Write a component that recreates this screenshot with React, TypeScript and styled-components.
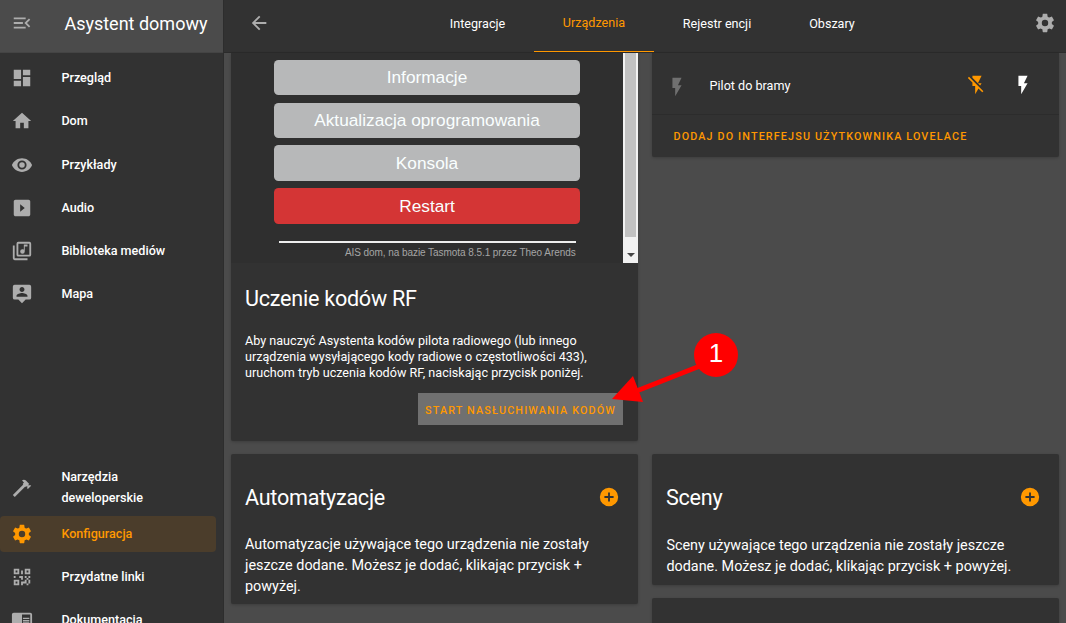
import React from "react";
import styled, { createGlobalStyle } from "styled-components";

const ACCENT = "#ff9800";
const PANEL = "#323232";
const BACKDROP = "#4b4b4b";

const icons = {
  menuOpen:
    "M21,15.61L19.59,17L14.58,12L19.59,7L21,8.39L17.44,12L21,15.61M3,6H16V8H3V6M3,13V11H13V13H3M3,18V16H16V18H3Z",
  dashboard: "M13,3V9H21V3M13,21H21V11H13M3,21H11V15H3M3,13H11V3H3V13Z",
  home: "M10,20V14H14V20H19V12H22L12,3L2,12H5V20H10Z",
  eye: "M12,9A3,3 0 0,0 9,12A3,3 0 0,0 12,15A3,3 0 0,0 15,12A3,3 0 0,0 12,9M12,17A5,5 0 0,1 7,12A5,5 0 0,1 12,7A5,5 0 0,1 17,12A5,5 0 0,1 12,17M12,4.5C7,4.5 2.73,7.61 1,12C2.73,16.39 7,19.5 12,19.5C17,19.5 21.27,16.39 23,12C21.27,7.61 17,4.5 12,4.5Z",
  playBox:
    "M19,3H5C3.89,3 3,3.89 3,5V19C3,20.1 3.9,21 5,21H19C20.1,21 21,20.1 21,19V5C21,3.89 20.1,3 19,3M10,16L10,8L15,12L10,16Z",
  music:
    "M20,2H8A2,2 0 0,0 6,4V16A2,2 0 0,0 8,18H20A2,2 0 0,0 22,16V4A2,2 0 0,0 20,2M20,16H8V4H20V16M12.5,15A2.5,2.5 0 0,0 15,12.5V7H18V5H14V10.5C13.58,10.19 13.07,10 12.5,10A2.5,2.5 0 0,0 10,12.5A2.5,2.5 0 0,0 12.5,15M4,6H2V20A2,2 0 0,0 4,22H18V20H4",
  account:
    "M20,2H4A2,2 0 0,0 2,4V16A2,2 0 0,0 4,18H8L12,22L16,18H20A2,2 0 0,0 22,16V4A2,2 0 0,0 20,2M12,4.3C13.5,4.3 14.7,5.5 14.7,7C14.7,8.5 13.5,9.7 12,9.7C10.5,9.7 9.3,8.5 9.3,7C9.3,5.5 10.5,4.3 12,4.3M18,15H6V14.1C6,12.1 10,11 12,11C14,11 18,12.1 18,14.1V15Z",
  hammer:
    "M2,19.63L13.43,8.2L12.72,7.5L14.14,6.07L12,3.89C13.2,2.7 15.09,2.7 16.27,3.89L19.87,7.5L18.45,8.91H21.29L22,9.62L18.45,13.21L17.74,12.5V9.62L16.27,11.04L15.56,10.33L4.13,21.76L2,19.63Z",
  cog: "M12,15.5A3.5,3.5 0 0,1 8.5,12A3.5,3.5 0 0,1 12,8.5A3.5,3.5 0 0,1 15.5,12A3.5,3.5 0 0,1 12,15.5M19.43,12.97C19.47,12.65 19.5,12.33 19.5,12C19.5,11.67 19.47,11.34 19.43,11L21.54,9.37C21.73,9.22 21.78,8.95 21.66,8.73L19.66,5.27C19.54,5.05 19.27,4.96 19.05,5.05L16.56,6.05C16.04,5.66 15.5,5.32 14.87,5.07L14.5,2.42C14.46,2.18 14.25,2 14,2H10C9.75,2 9.54,2.18 9.5,2.42L9.13,5.07C8.5,5.32 7.96,5.66 7.44,6.05L4.95,5.05C4.73,4.96 4.46,5.05 4.34,5.27L2.34,8.73C2.21,8.95 2.27,9.22 2.46,9.37L4.57,11C4.53,11.34 4.5,11.67 4.5,12C4.5,12.33 4.53,12.65 4.57,12.97L2.46,14.63C2.27,14.78 2.21,15.05 2.34,15.27L4.34,18.73C4.46,18.95 4.73,19.03 4.95,18.95L7.44,17.94C7.96,18.34 8.5,18.68 9.13,18.93L9.5,21.58C9.54,21.82 9.75,22 10,22H14C14.25,22 14.46,21.82 14.5,21.58L14.87,18.93C15.5,18.67 16.04,18.34 16.56,17.94L19.05,18.95C19.27,19.03 19.54,18.95 19.66,18.73L21.66,15.27C21.78,15.05 21.73,14.78 21.54,14.63L19.43,12.97Z",
  qrcode:
    "M3,11H5V13H3V11M11,5H13V9H11V5M9,11H13V15H11V13H9V11M15,11H17V13H19V11H21V13H19V15H21V19H19V21H17V19H13V21H11V17H15V15H17V13H15V11M19,19V15H17V19H19M15,3H21V9H15V3M17,5V7H19V5H17M3,3H9V9H3V3M5,5V7H7V5H5M3,15H9V21H3V15M5,17V19H7V17H5Z",
  book: "M13,12H20V13.5H13M13,9.5H20V11H13M13,14.5H20V16H13M21,4H3A2,2 0 0,0 1,6V19A2,2 0 0,0 3,21H21A2,2 0 0,0 23,19V6A2,2 0 0,0 21,4M21,19H12V6H21",
  flash: "M7,2V13H10V22L17,10H13L17,2H7Z",
  flashOff:
    "M17,10H13L17,2H7V4.18L15.46,12.64M3.27,3L2,4.27L7,9.27V13H10V22L13.58,15.86L17.73,20L19,18.73L3.27,3Z",
  plusCircle:
    "M17,13H13V17H11V13H7V11H11V7H13V11H17M12,2A10,10 0 0,0 2,12A10,10 0 0,0 12,22A10,10 0 0,0 22,12A10,10 0 0,0 12,2Z",
  arrowLeft:
    "M20,11V13H8L13.5,18.5L12.08,19.92L4.16,12L12.08,4.08L13.5,5.5L8,11H20Z",
};

type IconName = keyof typeof icons;

const GlobalStyle = createGlobalStyle`
  * { box-sizing: border-box; }
  body { margin: 0; overflow: hidden; background: ${BACKDROP}; }
`;

const Svg = styled.svg`
  width: 22px;
  height: 22px;
  flex: none;
  display: block;
  fill: currentColor;
`;

const Icon = ({ name }: { name: IconName }) => (
  <Svg viewBox="0 0 24 24">
    <path d={icons[name]} fillRule={name === "playBox" ? "evenodd" : "nonzero"} />
  </Svg>
);

const Page = styled.div`
  position: relative;
  display: flex;
  width: 1066px;
  height: 623px;
  overflow: hidden;
  background: ${BACKDROP};
  color: #fff;
  font-family: Roboto, "Liberation Sans", sans-serif;
`;

const Sidebar = styled.aside`
  display: flex;
  flex-direction: column;
  width: 224px;
  flex: none;
  height: 623px;
  overflow: hidden;
  background: ${PANEL};
  border-right: 1px solid #2d2d2d;
`;

const SidebarHeader = styled.header`
  display: flex;
  align-items: center;
  flex: none;
  height: 53px;
  padding: 0 0 6px 11px;
  gap: 31.4px;
  background: ${BACKDROP};
  border-bottom: 1px solid #444;
  color: #adadad;
`;

const SidebarTitle = styled.div`
  color: #fff;
  font-size: 18px;
  line-height: 24px;
  padding-top: 1px;
  white-space: nowrap;
`;

const NavList = styled.nav`
  display: flex;
  flex-direction: column;
  gap: 7.2px;
`;

const PrimaryNav = styled(NavList)`
  padding-top: 6.8px;
`;

const SecondaryNav = styled(NavList)`
  margin-top: 154.6px;
`;

const NavItem = styled.a<{ $active?: boolean }>`
  display: flex;
  align-items: center;
  flex: none;
  width: 216px;
  min-height: 36px;
  padding-left: 11px;
  gap: 28.4px;
  border-radius: 4px;
  background: ${(p) => (p.$active ? "#4b3d2b" : "transparent")};
  color: ${(p) => (p.$active ? ACCENT : "#adadad")};

  ${Svg} {
    margin-top: 0.8px;
  }
`;

const NavLabel = styled.span<{ $active?: boolean }>`
  width: 110px;
  color: ${(p) => (p.$active ? ACCENT : "#fff")};
  font-size: 12.6px;
  font-weight: 500;
  line-height: 21px;
`;

const Main = styled.main`
  display: flex;
  flex-direction: column;
  width: 842px;
  height: 623px;
  overflow: hidden;
`;

const Toolbar = styled.header`
  display: flex;
  flex: none;
  height: 53px;
  padding: 0 10px 0 24.4px;
  background: ${PANEL};
  border-bottom: 1px solid #2b2b2b;
  color: #adadad;
`;

const ToolbarIcon = styled.div`
  display: flex;
  align-items: center;
  height: 46px;
`;

const Tabs = styled.div`
  display: flex;
  margin-left: 150.6px;
  margin-right: auto;
`;

const Tab = styled.div<{ $width: number; $active?: boolean }>`
  width: ${(p) => p.$width}px;
  height: 52px;
  padding-top: ${(p) => (p.$active ? 13 : 14)}px;
  border-bottom: ${(p) => (p.$active ? `1px solid ${ACCENT}` : "none")};
  color: ${(p) => (p.$active ? ACCENT : "#fff")};
  font-size: 12.6px;
  line-height: 20px;
  text-align: center;
  white-space: nowrap;
`;

const Columns = styled.div`
  display: grid;
  grid-template-columns: 407px 407px;
  grid-template-rows: 388px auto;
  column-gap: 14px;
  row-gap: 13px;
  padding-left: 7px;
  align-items: start;
`;

const Stack = styled.div`
  display: flex;
  flex-direction: column;
  gap: 13px;
`;

const Card = styled.section<{ $height: number; $continued?: boolean }>`
  height: ${(p) => p.$height}px;
  overflow: hidden;
  background: ${PANEL};
  border-radius: ${(p) => (p.$continued ? "0 0 2px 2px" : "2px")};
  box-shadow: 0 1px 3px rgba(0, 0, 0, 0.2);
`;

const Frame = styled.div`
  display: flex;
  height: 210px;
  background: #2f2f2f;
`;

const FrameBody = styled.div`
  display: flex;
  flex-direction: column;
  width: 392px;
  padding: 7px 43px 0;
  font-family: "Liberation Sans", Arial, sans-serif;
`;

const DeviceButtons = styled.div`
  display: grid;
  grid-template-rows: 36px 35.4px 35.6px 36px;
  row-gap: 7px;
`;

const DeviceButton = styled.button<{ $danger?: boolean }>`
  padding: 0;
  border: 0;
  border-radius: 4.5px;
  background: ${(p) => (p.$danger ? "#d43535" : "#b7b8b9")};
  color: #faffff;
  font: 17.28px/20px "Liberation Sans", Arial, sans-serif;

  &:nth-child(-n + 2) {
    height: 35px;
    padding-bottom: 1px;
  }
`;

const FrameFooter = styled.footer`
  margin: 17px 4px 0 5px;
  padding: 4px 0.4px 0 0;
  border-top: 2px solid #eee;
  color: #a5a5a5;
  font-size: 10px;
  letter-spacing: -0.06px;
  line-height: 12px;
  text-align: right;
  white-space: nowrap;
`;

const Scrollbar = styled.div`
  display: flex;
  flex-direction: column;
  align-items: center;
  width: 15px;
  background: #f1f1f1;
`;

const ScrollThumb = styled.div`
  width: 11px;
  height: 184px;
  background: #c1c1c1;
`;

const ScrollArrow = styled.div`
  margin-top: 16px;
  border: 4px solid transparent;
  border-top-color: #444;
  border-bottom: 0;
`;

const Learning = styled.div`
  display: flex;
  flex-direction: column;
  padding: 22px 15px 0 14px;
`;

const CardTitle = styled.h2`
  margin: 0;
  font-size: 21.6px;
  font-weight: 400;
  line-height: 28px;
  letter-spacing: -0.26px;
  white-space: nowrap;
`;

const Hint = styled.p`
  margin: 20px 0 12px;
  font-size: 12.6px;
  line-height: 16px;
  white-space: nowrap;
`;

const ListenButton = styled.button`
  align-self: flex-end;
  width: 205px;
  height: 32px;
  padding: 2px 0 0;
  border: 0;
  background: #707070;
  color: ${ACCENT};
  font: 500 10.8px Roboto, sans-serif;
  letter-spacing: 1.13px;
  white-space: nowrap;
`;

const EntityRow = styled.div`
  display: flex;
  align-items: center;
  height: 62px;
  padding: 4px 25px 0 14px;
  border-bottom: 1px solid #2c2c2c;
`;

const EntityIcon = styled.div<{ $color: string; $left?: number; $drop?: number }>`
  margin-left: ${(p) => p.$left ?? 0}px;
  margin-top: ${(p) => p.$drop ?? 0}px;
  color: ${(p) => p.$color};
`;

const EntityName = styled.span`
  flex: 1;
  margin-left: 21.6px;
  font-size: 12.6px;
`;

const CardLink = styled.a`
  display: block;
  padding: 14px 0 0 21.5px;
  color: ${ACCENT};
  font-size: 10.8px;
  font-weight: 500;
  line-height: 16px;
  letter-spacing: 1.13px;
  white-space: nowrap;
`;

const CardHead = styled.div`
  display: flex;
  align-items: flex-start;
  justify-content: space-between;
  padding: 30px 18px 0 14px;
  color: ${ACCENT};

  ${CardTitle} {
    color: #fff;
  }

  ${Svg} {
    margin-top: 2px;
  }
`;

const CardText = styled.p<{ $top: number; $indent?: number }>`
  margin: ${(p) => p.$top}px 14px 0 ${(p) => p.$indent ?? 14}px;
  font-size: 14.4px;
  line-height: 21px;
  white-space: nowrap;
`;

const Annotation = styled.div`
  position: absolute;
  left: 606px;
  top: 328px;
  width: 140px;
  height: 80px;
`;

const Arrow = styled.svg`
  position: absolute;
  left: 0;
  top: 0;
`;

const Marker = styled.div`
  position: absolute;
  left: 88px;
  top: 5px;
  width: 44px;
  height: 44px;
  border-radius: 50%;
  background: #f00;
  font: 26px/40px "Liberation Sans", sans-serif;
  text-align: center;
`;

const primary: [IconName, string][] = [
  ["dashboard", "Przegląd"],
  ["home", "Dom"],
  ["eye", "Przykłady"],
  ["playBox", "Audio"],
  ["music", "Biblioteka mediów"],
  ["account", "Mapa"],
];

const secondary: [IconName, string, boolean][] = [
  ["hammer", "Narzędzia deweloperskie", false],
  ["cog", "Konfiguracja", true],
  ["qrcode", "Przydatne linki", false],
  ["book", "Dokumentacja", false],
];

export default function App() {
  return (
    <Page>
      <GlobalStyle />
      <Sidebar>
        <SidebarHeader>
          <Icon name="menuOpen" />
          <SidebarTitle>Asystent domowy</SidebarTitle>
        </SidebarHeader>
        <PrimaryNav>
          {primary.map(([icon, label]) => (
            <NavItem key={label}>
              <Icon name={icon} />
              <NavLabel>{label}</NavLabel>
            </NavItem>
          ))}
        </PrimaryNav>
        <SecondaryNav>
          {secondary.map(([icon, label, active]) => (
            <NavItem key={label} $active={active}>
              <Icon name={icon} />
              <NavLabel $active={active}>{label}</NavLabel>
            </NavItem>
          ))}
        </SecondaryNav>
      </Sidebar>

      <Main>
        <Toolbar>
          <ToolbarIcon>
            <Icon name="arrowLeft" />
          </ToolbarIcon>
          <Tabs>
            <Tab $width={113}>Integracje</Tab>
            <Tab $width={120} $active>
              Urządzenia
            </Tab>
            <Tab $width={126}>Rejestr encji</Tab>
            <Tab $width={104}>Obszary</Tab>
          </Tabs>
          <ToolbarIcon>
            <Icon name="cog" />
          </ToolbarIcon>
        </Toolbar>

        <Columns>
          <Card $height={388} $continued>
            <Frame>
              <FrameBody>
                <DeviceButtons>
                  <DeviceButton>Informacje</DeviceButton>
                  <DeviceButton>Aktualizacja oprogramowania</DeviceButton>
                  <DeviceButton>Konsola</DeviceButton>
                  <DeviceButton $danger>Restart</DeviceButton>
                </DeviceButtons>
                <FrameFooter>
                  AIS dom, na bazie Tasmota 8.5.1 przez Theo Arends
                </FrameFooter>
              </FrameBody>
              <Scrollbar>
                <ScrollThumb />
                <ScrollArrow />
              </Scrollbar>
            </Frame>
            <Learning>
              <CardTitle>Uczenie kodów RF</CardTitle>
              <Hint>
                Aby nauczyć Asystenta kodów pilota radiowego (lub innego
                <br />
                urządzenia wysyłającego kody radiowe o częstotliwości 433),
                <br />
                uruchom tryb uczenia kodów RF, naciskając przycisk poniżej.
              </Hint>
              <ListenButton>START NASŁUCHIWANIA KODÓW</ListenButton>
            </Learning>
          </Card>

          <Card $height={104} $continued>
            <EntityRow>
              <EntityIcon $color="#707070" $drop={2}>
                <Icon name="flash" />
              </EntityIcon>
              <EntityName>Pilot do bramy</EntityName>
              <EntityIcon $color={ACCENT} $drop={-1}>
                <Icon name="flashOff" />
              </EntityIcon>
              <EntityIcon $color="#fff" $left={24.2} $drop={-1}>
                <Icon name="flash" />
              </EntityIcon>
            </EntityRow>
            <CardLink>DODAJ DO INTERFEJSU UŻYTKOWNIKA LOVELACE</CardLink>
          </Card>

          <Card $height={150}>
            <CardHead>
              <CardTitle>Automatyzacje</CardTitle>
              <Icon name="plusCircle" />
            </CardHead>
            <CardText $top={22}>
              Automatyzacje używające tego urządzenia nie zostały
              <br />
              jeszcze dodane. Możesz je dodać, klikając przycisk +
              <br />
              powyżej.
            </CardText>
          </Card>

          <Stack>
            <Card $height={131}>
              <CardHead>
                <CardTitle>Sceny</CardTitle>
                <Icon name="plusCircle" />
              </CardHead>
              <CardText $top={23} $indent={14.4}>
                Sceny używające tego urządzenia nie zostały jeszcze
                <br />
                dodane. Możesz je dodać, klikając przycisk + powyżej.
              </CardText>
            </Card>
            <Card $height={40} />
          </Stack>
        </Columns>
      </Main>

      <Annotation>
        <Arrow width="140" height="80" viewBox="0 0 140 80">
          <path d="M28 64 L94 38" stroke="#f00" strokeWidth="5" />
          <path d="M6 71 L27 48 L37 74 Z" fill="#f00" />
        </Arrow>
        <Marker>1</Marker>
      </Annotation>
    </Page>
  );
}
